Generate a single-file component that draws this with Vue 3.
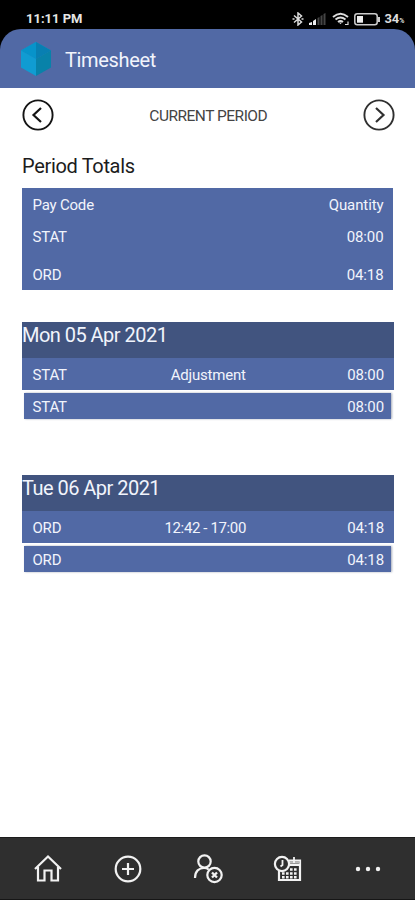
<script setup>
const totals = [
  { code: 'STAT', quantity: '08:00' },
  { code: 'ORD', quantity: '04:18' },
]
const days = [
  { date: 'Mon 05 Apr 2021', code: 'STAT', detail: 'Adjustment', quantity: '08:00' },
  { date: 'Tue 06 Apr 2021', code: 'ORD', detail: '12:42 - 17:00', quantity: '04:18', timed: true },
]
</script>

<template>
  <div class="screen">
    <div class="status">
      <span class="clock">11:11 PM</span>
      <div class="indicators">
        <svg class="bluetooth" width="12" height="14" viewBox="0 0 12 14" fill="none" stroke="#ddd" stroke-width="1.5">
          <path d="M2 3.500 9.500 10 6 13V1l3.500 3L2 10.500" />
          <path d="M.5 7h2M9.500 7h2" />
        </svg>
        <svg class="signal" width="17" height="12" viewBox="0 0 17 12">
          <path d="M0 12V10l3-1v3zM4 12V8l3-2v6z" fill="#eee" />
          <path d="M8.500 12V5l2-1v8zM11.500 12V3l2-1v10zM14.500 12V1l2-1v12z" fill="#454545" />
        </svg>
        <svg class="wifi" width="18" height="14" viewBox="0 0 18 14" fill="none" stroke="#ddd" stroke-width="1.9">
          <path d="M1 5Q8.500-1.500 16 5M3.500 7.500q5-4 10 0M6 10q2.500-2 5 0" />
          <path d="m7 10.500 1.500 1.800 1.500-1.800z" fill="#ddd" stroke="none" />
          <path d="M13 12.500h3v-3" stroke-width="1.200" />
        </svg>
        <svg class="battery" width="27" height="13" viewBox="0 0 27 13">
          <rect x=".8" y=".8" width="22.400" height="11" rx="2.500" fill="none" stroke="#ccc" stroke-width="1.500" />
          <rect x="3" y="3" width="6" height="6.700" fill="#eee" />
          <path d="M24 4h2v5h-2z" fill="#ccc" />
        </svg>
        <span class="percent">34<small>%</small></span>
      </div>
    </div>

    <header class="header">
      <svg width="32" height="36" viewBox="0 0 32 36">
        <path d="M16 1 31 9.500 16 18 1 9.500z" fill="#0a9bd0" />
        <path d="M16 1v17L1 9.500z" fill="#0793ca" />
        <path d="M1 9.500 16 18v17L1 26.500z" fill="#109cd2" />
        <path d="M16 1 31 9.500 16 18z" fill="#087fb2" />
        <path d="M31 9.500 16 18v17l15-8.500z" fill="#0882a9" />
      </svg>
      <h1>Timesheet</h1>
    </header>

    <main class="content">
      <div class="period">
        <svg class="prev" width="32" height="32" viewBox="0 0 32 32" fill="none" stroke="#141414" stroke-width="1.900">
          <circle cx="16" cy="16" r="14.600" />
          <path d="m19 9-7.500 7 7.500 7" stroke-width="2.200" />
        </svg>
        <span>CURRENT PERIOD</span>
        <svg class="next" width="32" height="32" viewBox="0 0 32 32" fill="none" stroke="#303030" stroke-width="1.900">
          <circle cx="16" cy="16" r="14.600" />
          <path d="m13 9 7.500 7-7.500 7" stroke-width="2.200" />
        </svg>
      </div>

      <h2>Period Totals</h2>
      <section class="totals">
        <div class="line head"><span>Pay Code</span><span class="amount">Quantity</span></div>
        <div v-for="row in totals" :key="row.code" class="line">
          <span>{{ row.code }}</span><span class="amount">{{ row.quantity }}</span>
        </div>
      </section>

      <section v-for="day in days" :key="day.date" class="day">
        <h3>{{ day.date }}</h3>
        <div class="entry">
          <span>{{ day.code }}</span><span class="detail" :class="{ timed: day.timed }">{{ day.detail }}</span><span class="amount">{{ day.quantity }}</span>
        </div>
        <div class="summary"><span>{{ day.code }}</span><span class="amount">{{ day.quantity }}</span></div>
      </section>
    </main>

    <nav class="tabs">
      <svg width="32" height="32" viewBox="0 0 32 32" fill="none" stroke="#f2f2f2" stroke-width="2.200">
        <path d="M3 16 16 3.500 29 16M6 14v13.500h6.500V17.500h7v10H26V14" />
      </svg>
      <svg width="32" height="32" viewBox="0 0 32 32" fill="none" stroke="#f2f2f2" stroke-width="2.200">
        <circle cx="16" cy="16" r="12.300" />
        <path d="M16 10v12M10 16h12" />
      </svg>
      <svg width="32" height="32" viewBox="0 0 32 32" fill="none" stroke="#f2f2f2" stroke-width="2.200">
        <circle cx="12.500" cy="8.500" r="6.200" />
        <path d="M3 25c0-7 4-10 9-10 2 0 3.500.6 4.800 1.600" />
        <circle cx="22.500" cy="22" r="7.200" />
        <path d="m20 19.500 5 5m0-5-5 5" stroke-width="2.300" />
      </svg>
      <svg width="32" height="32" viewBox="0 0 32 32" fill="none" stroke="#f2f2f2" stroke-width="2.200">
        <path d="M17 7.500h11V27H7V18M17 12h11" />
        <path d="M17 9.500h11" stroke="#bbb" stroke-width="2.500" />
        <path d="M22 4v6" stroke-width="1.800" />
        <circle cx="10" cy="11" r="7.100" />
        <path d="M10.500 7v5l-2 1.500" stroke-width="1.800" />
        <path d="M18 16.500h8M10 20.500h16M10 24.200h16" stroke-width="2.400" stroke-dasharray="2.600 1.400" />
      </svg>
      <svg width="32" height="32" viewBox="0 0 32 32" fill="#f2f2f2">
        <circle cx="6" cy="16" r="2.200" /><circle cx="16" cy="16" r="2.200" /><circle cx="26" cy="16" r="2.200" />
      </svg>
    </nav>
  </div>
</template>

<style>
body {
  margin: 0;
  background: #000;
}
</style>

<style scoped>
.screen {
  width: 415px;
  height: 900px;
  display: flex;
  flex-direction: column;
  overflow: hidden;
  background: #000;
  color: #f1f4fc;
  font-family: Roboto, "Liberation Sans", sans-serif;
  font-size: 15px;
  letter-spacing: -0.2px;
}
svg {
  display: block;
  flex: none;
}
h1, h2, h3 {
  margin: 0;
  font-weight: 400;
}
.status {
  height: 29px;
  box-sizing: border-box;
  padding: 9px 10.500px 0 26px;
  display: flex;
  justify-content: space-between;
  line-height: 20px;
  letter-spacing: 0;
}
.clock {
  font-size: 13px;
  font-weight: 700;
  color: #e6e6e6;
}
.indicators {
  display: flex;
  align-items: center;
  height: 20px;
}
.signal { margin-left: 5px; }
.wifi { margin-left: 6px; }
.battery { margin-left: 4px; }
.percent {
  margin-left: 3px;
  padding-top: 1px;
  font-size: 13px;
  font-weight: 700;
  color: #ddd;
}
.percent small {
  font-size: 7px;
}
.header {
  height: 59px;
  box-sizing: border-box;
  padding: 1px 20px 0;
  display: flex;
  align-items: center;
  gap: 13px;
  background: #5169a5;
  border-radius: 21px 21px 0 0;
}
.header h1 {
  padding-top: 2px;
  font-size: 20px;
  line-height: 24px;
  letter-spacing: -0.35px;
}
.content {
  flex: 1;
  min-height: 0;
  padding: 11px 21px 0 22px;
  background: #fff;
}
.period {
  height: 32px;
  display: flex;
  align-items: center;
  justify-content: space-between;
  color: #444;
  font-size: 15.500px;
  letter-spacing: -0.5px;
  margin: 0 -1px 0 -0.5px;
}
.period span {
  padding-top: 1px;
}
h2 {
  margin-top: 23px;
  height: 34px;
  line-height: 24px;
  font-size: 20px;
  letter-spacing: -0.33px;
  color: #1c1c1c;
}
.totals {
  height: 102px;
  margin: 0 1px 32px 0;
  box-sizing: border-box;
  padding: 1px 9.500px 0 10.500px;
  background: #5169a5;
}
.line, .entry, .summary {
  display: flex;
  align-items: center;
  justify-content: space-between;
}
.line {
  height: 38px;
  padding-bottom: 6px;
  box-sizing: border-box;
}
.line.head {
  height: 32px;
  padding: 0;
}
.day {
  height: 98px;
  margin-bottom: 55px;
}
.day h3 {
  height: 36px;
  line-height: 27px;
  font-size: 20px;
  letter-spacing: -0.53px;
  background: #41547f;
}
.entry {
  height: 32px;
  box-sizing: border-box;
  padding: 1px 10px 0 10.500px;
  background: #5169a5;
  display: grid;
  grid-template-columns: 1fr auto 1fr;
}
.detail.timed {
  margin-right: 6px;
  letter-spacing: -0.37px;
}
.amount {
  text-align: right;
  letter-spacing: -0.1px;
}
.summary {
  height: 26.500px;
  box-sizing: border-box;
  margin: 2.500px 3px 0 2px;
  padding: 1.500px 7px 0 8.500px;
  background: #5169a5;
  box-shadow: 1px 0 2px #a5abb9;
}
.tabs {
  height: 63px;
  box-sizing: border-box;
  padding: 0 31px 0 32px;
  display: flex;
  align-items: center;
  justify-content: space-between;
  background: #2f2f2f;
  border-top: 1px solid #1c1c1c;
  border-bottom: 1px solid #161616;
}
</style>
